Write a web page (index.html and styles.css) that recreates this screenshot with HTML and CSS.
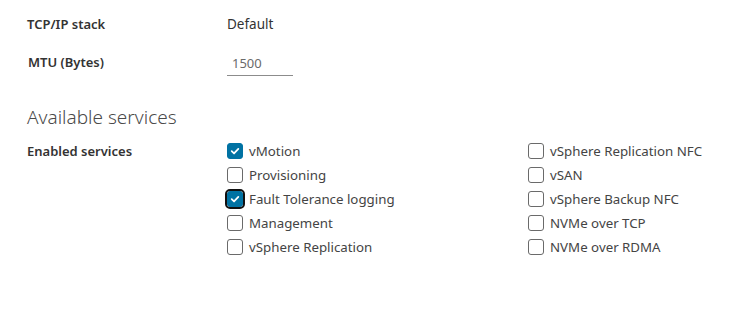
FILE: index.html
```html
<!DOCTYPE html>
<html>
<head>
<meta charset="utf-8">
<link rel="stylesheet" href="styles.css">
</head>
<body>
<div class="page">
  <div class="row row-stack">
    <div class="label">TCP/IP stack</div>
    <div class="value">Default</div>
  </div>
  <div class="row row-mtu">
    <div class="label label-mtu">MTU (Bytes)</div>
    <div class="input">1500</div>
  </div>
  <h2 class="heading">Available services</h2>
  <div class="row row-services">
    <div class="label">Enabled services</div>
    <div class="services">
      <div class="col">
        <label class="cb"><span class="box checked"><svg viewBox="0 0 16 16"><path d="M4.2 8.2 L6.9 10.8 L11.8 5.6" fill="none" stroke="#fff" stroke-width="2" stroke-linecap="round" stroke-linejoin="round"/></svg></span>vMotion</label>
        <label class="cb"><span class="box"></span>Provisioning</label>
        <label class="cb"><span class="box checked focus"><svg viewBox="0 0 16 16"><path d="M4.2 8.2 L6.9 10.8 L11.8 5.6" fill="none" stroke="#fff" stroke-width="2" stroke-linecap="round" stroke-linejoin="round"/></svg></span>Fault Tolerance logging</label>
        <label class="cb"><span class="box"></span>Management</label>
        <label class="cb"><span class="box"></span>vSphere Replication</label>
      </div>
      <div class="col">
        <label class="cb"><span class="box"></span>vSphere Replication NFC</label>
        <label class="cb"><span class="box"></span>vSAN</label>
        <label class="cb"><span class="box"></span>vSphere Backup NFC</label>
        <label class="cb"><span class="box"></span>NVMe over TCP</label>
        <label class="cb"><span class="box"></span>NVMe over RDMA</label>
      </div>
    </div>
  </div>
</div>
</body>
</html>
```
FILE: styles.css
```css
html, body {
  margin: 0;
  padding: 0;
  background: #fff;
}
body {
  font-family: "Noto Sans", "Open Sans", sans-serif;
  color: #333;
  width: 738px;
  height: 330px;
  overflow: hidden;
}
.page {
  padding: 14px 0 0 27px;
}
.row {
  display: grid;
  grid-template-columns: 200px auto;
  align-items: center;
}
.label {
  font-size: 13px;
  font-weight: 600;
  color: #333;
}
.label-mtu {
  padding-left: 1px;
}
.value {
  font-size: 13.5px;
  color: #333;
}
.row-stack {
  height: 20px;
}
.row-mtu {
  margin-top: 14px;
  height: 24px;
}
.input {
  width: 61px;
  padding: 0 0 3px 5px;
  border-bottom: 1px solid #8c8c8c;
  font-size: 13px;
  color: #6a6a6a;
  margin-top: 6px;
}
.heading {
  margin: 32px 0 0 0;
  font-size: 19px;
  font-weight: 300;
  color: #4a4a4a;
  line-height: 26px;
}
.row-services {
  margin-top: 9px;
  align-items: start;
}
.row-services .label {
  line-height: 24px;
}
.services {
  display: grid;
  grid-template-columns: 301px auto;
}
.col {
  display: flex;
  flex-direction: column;
}
.cb {
  display: flex;
  align-items: center;
  height: 24px;
  font-size: 13.3px;
  color: #444;
}
.box {
  width: 14px;
  height: 14px;
  border: 1px solid #6a6a6a;
  border-radius: 3px;
  margin-right: 6px;
  box-sizing: content-box;
  flex: none;
  display: flex;
}
.box.checked {
  background: #0072a3;
  border-color: #0072a3;
}
.box svg {
  width: 14px;
  height: 14px;
}
.box.focus {
  outline: 2px solid #111;
  outline-offset: 0px;
}
```
